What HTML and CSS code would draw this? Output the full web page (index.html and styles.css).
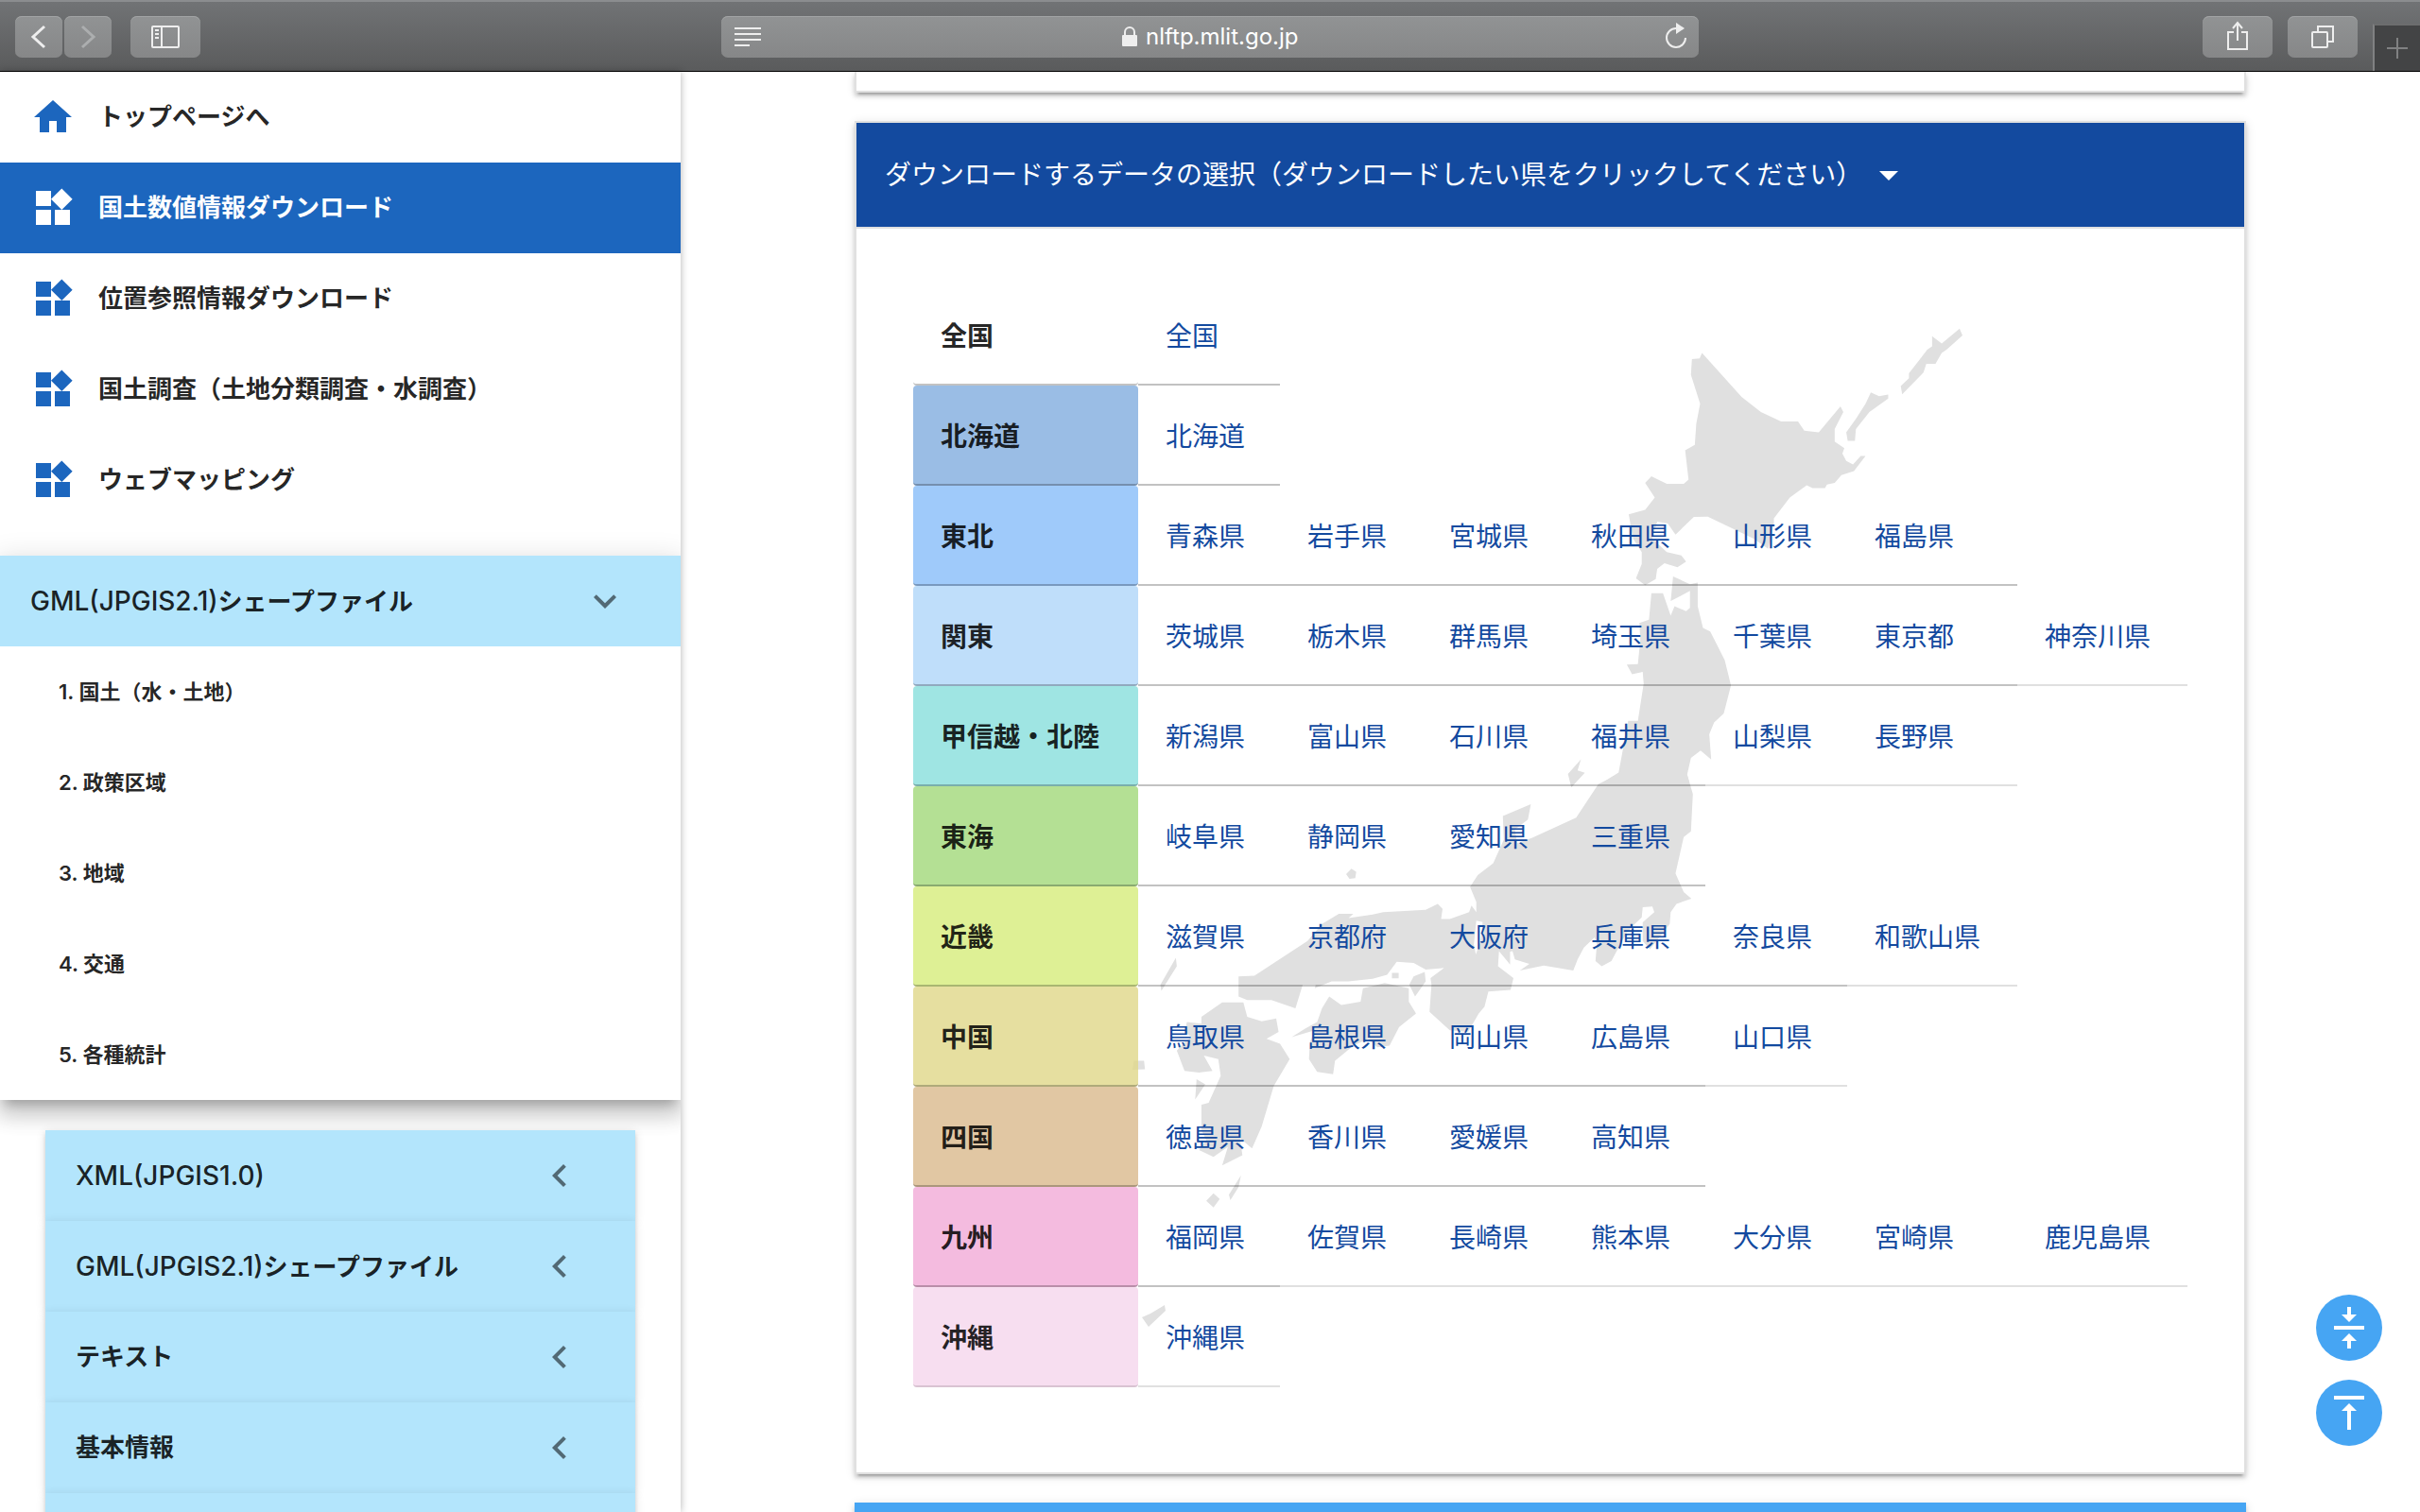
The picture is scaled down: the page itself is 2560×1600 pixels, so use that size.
FILE: index.html
```html
<!DOCTYPE html>
<html lang="ja">
<head>
<meta charset="utf-8">
<title>国土数値情報ダウンロード</title>
<link rel="stylesheet" href="styles.css">
</head>
<body>
<svg class="defs" width="0" height="0" aria-hidden="true">
  <symbol id="widgets" viewBox="0 0 24 24"><path d="M13 13v8h8v-8h-8zM3 21h8v-8H3v8zM3 3v8h8V3H3zm13.66-1.31L11 7.34 16.66 13l5.66-5.66-5.66-5.65z"/></symbol>
  <symbol id="chevron-down" viewBox="0 0 24 24"><path d="M16.59 8.59L12 13.17 7.41 8.59 6 10l6 6 6-6z"/></symbol>
  <symbol id="chevron-left" viewBox="0 0 24 24"><path d="M15.41 7.41L14 6l-6 6 6 6 1.41-1.41L10.83 12z"/></symbol>
</svg>

<header class="toolbar">
  <div class="tools">
    <div class="history">
      <button class="tool tool-nav" type="button" aria-label="戻る"><svg width="50" height="44" viewBox="0 0 50 44"><path class="line line-bold" d="M31 11L19 22l12 11"/></svg></button>
      <button class="tool tool-nav" type="button" aria-label="進む" disabled><svg width="50" height="44" viewBox="0 0 50 44"><path class="line line-bold" d="M19 11l12 11-12 11"/></svg></button>
    </div>
    <button class="tool" type="button" aria-label="サイドバー"><svg width="74" height="44" viewBox="0 0 74 44"><rect class="line" x="23" y="11" width="28" height="22" rx="1"/><path class="line" d="M33 11v22M26 15h4M26 19h4M26 23h4"/></svg></button>
  </div>
  <div class="address">
    <button class="plain" type="button" aria-label="リーダー"><svg width="28" height="44" viewBox="0 0 28 44"><path class="line" d="M0 13h28M0 19h28M0 25h28M0 31h16"/></svg></button>
    <label class="url">
      <svg width="18" height="22" viewBox="0 0 18 22"><rect x="1" y="9" width="16" height="12" rx="1" fill="#eee"/><path class="line" d="M4 10V6a5 5 0 0 1 10 0v4"/></svg>
      <input class="url-input" type="text" value="nlftp.mlit.go.jp" aria-label="アドレス">
    </label>
    <button class="plain" type="button" aria-label="再読み込み"><svg width="24" height="44" viewBox="0 0 24 44"><path class="line" d="M12 13a10 10 0 1 0 10 10"/><path d="M12 7l9 6-9 6z" fill="#eee"/></svg></button>
  </div>
  <div class="tools tools-end">
    <button class="tool" type="button" aria-label="共有"><svg width="74" height="44" viewBox="0 0 74 44"><path class="line" d="M33 17h-6v18h20V17h-6M37 26V8M32 13l5-6 5 6"/></svg></button>
    <button class="tool" type="button" aria-label="タブ一覧"><svg width="74" height="44" viewBox="0 0 74 44"><rect class="line" x="26" y="17" width="16" height="16" rx="1"/><path class="line" d="M32 16v-5h16v16h-5"/></svg></button>
    <button class="new-tab" type="button" aria-label="新規タブ"><svg width="24" height="24" viewBox="0 0 24 24"><path d="M1 12h22M12 1v22" stroke="#808182" stroke-width="2"/></svg></button>
  </div>
</header>

<div class="shell">
  <aside class="sidebar">
    <nav class="nav">
      <a class="nav-item" href="#"><svg class="icon" viewBox="0 0 24 24"><path d="M10 20v-6h4v6h5v-8h3L12 3 2 12h3v8z"/></svg>トップページへ</a>
      <a class="nav-item active" href="#"><svg class="icon"><use href="#widgets"/></svg>国土数値情報ダウンロード</a>
      <a class="nav-item" href="#"><svg class="icon"><use href="#widgets"/></svg>位置参照情報ダウンロード</a>
      <a class="nav-item" href="#"><svg class="icon"><use href="#widgets"/></svg>国土調査（土地分類調査・水調査）</a>
      <a class="nav-item" href="#"><svg class="icon"><use href="#widgets"/></svg>ウェブマッピング</a>
    </nav>
    <section class="panel panel-open">
      <button class="panel-head" type="button"><span><span class="latin">GML(JPGIS2.1)</span>シェープファイル</span><svg class="icon"><use href="#chevron-down"/></svg></button>
      <a class="sub-item" href="#">1. 国土（水・土地）</a>
      <a class="sub-item" href="#">2. 政策区域</a>
      <a class="sub-item" href="#">3. 地域</a>
      <a class="sub-item" href="#">4. 交通</a>
      <a class="sub-item" href="#">5. 各種統計</a>
    </section>
    <div class="closed-panels">
      <section class="panel"><button class="panel-head" type="button"><span class="latin">XML(JPGIS1.0)</span><svg class="icon"><use href="#chevron-left"/></svg></button></section>
      <section class="panel"><button class="panel-head" type="button"><span><span class="latin">GML(JPGIS2.1)</span>シェープファイル</span><svg class="icon"><use href="#chevron-left"/></svg></button></section>
      <section class="panel"><button class="panel-head" type="button">テキスト<svg class="icon"><use href="#chevron-left"/></svg></button></section>
      <section class="panel"><button class="panel-head" type="button">基本情報<svg class="icon"><use href="#chevron-left"/></svg></button></section>
      <section class="panel panel-blank"></section>
    </div>
  </aside>

  <main class="content">
    <section class="card card-previous"></section>
    <section class="card">
      <h2 class="card-title">ダウンロードするデータの選択（ダウンロードしたい県をクリックしてください）<svg class="icon" viewBox="0 0 24 24"><path d="M7 10l5 5 5-5z"/></svg></h2>
      <div class="card-body">
        <svg class="map" width="900" height="1100" viewBox="1190 330 900 1100" aria-hidden="true">
          <g transform="translate(1600 320) scale(.5102 .3571)">
            <path d="M927 78L933 98 900 140 890 150 877 182 858 182 852 208 808 272 805 248 822 225 822 210 860 140 870 130 870 100 890 122z"/>
            <path d="M743 267L760 278 779 273 779 285 740 325 712 375 710 410 695 410 692 385 712 345 732 300z"/>
            <path d="M393 150L475 280 515 325 557 353 592 353 605 380 635 385 680 308 686 325 668 375 668 412 688 432 684 448 692 470 706 480 722 455 732 455 708 500 682 512 668 535 652 540 648 550 622 550 610 542 575 578 542 640 542 655 530 730 500 700 405 635 376 636 338 688 322 655 300 650 290 700 320 740 350 750 360 768 342 785 315 773 300 790 297 820 275 838 256 818 268 775 268 740 250 700 241 628 275 615 295 578 275 535 288 515 320 538 355 538 365 525 358 438 378 422 381 360 389 300 370 215 372 168 388 166z"/>
            <path d="M288 862L312 862 328 928 336 900 360 915 368 905 368 855 328 885 333 812 368 835 384 830 384 900 395 965 410 975 440 1060 453 1135 438 1218 418 1245 408 1280 412 1355 390 1328 370 1350 362 1400 366 1420 190 1420 220 1393 240 1240 260 1240 272 1130 270 1095 248 1102 237 1073 260 1072 265 1000 263 950 283 940z"/>
          </g>
          <g transform="translate(1100 760) scale(.5102 .3571)">
            <path d="M1342 166L1354 225 1350 335 1335 352 1318 460 1335 515 1351 535 1320 550 1308 575 1306 610 1290 640 1265 685 1250 660 1250 605 1274 575 1270 558 1250 560 1248 590 1230 615 1215 640 1200 680 1185 720 1165 735 1152 720 1155 670 1150 650 1128 680 1115 715 1106 748 1045 733 995 748 1015 728 985 715 980 690 975 692 975 730 952 690 950 735 982 770 976 805 930 810 922 855 910 875 888 930 850 925 808 870 812 790 810 770 838 740 800 745 775 725 740 722 720 760 690 772 640 780 605 780 570 800 572 790 545 790 530 860 480 835 430 835 412 825 412 765 445 763 555 660 585 610 620 580 650 580 640 592 690 582 712 575 800 568 825 550 835 565 832 595 850 595 890 575 895 555 905 575 905 545 892 500 908 465 940 430 962 360 960 290 1018 255 1012 300 985 330 990 370 1020 355 1112 295 1158 195 1200 166z"/>
            <path d="M905 600L918 604 914 660 904 700 900 670z" class="lake"/>
            <path d="M798 752L800 780 778 825 766 790 775 765zM730 755h14v16h-14z"/>
            <path d="M600 825L625 850 665 840 670 800 715 785 765 800 765 840 780 875 745 915 725 970 700 975 680 950 650 970 612 1015 608 1055 575 1048 558 1010 560 960 570 925 522 945 550 920 575 900 585 860z"/>
            <path d="M378 842L422 842 430 885 460 898 490 890 495 930 470 950 498 965 518 1010 485 1090 460 1210 440 1275 415 1245 420 1295 378 1325 390 1270 360 1300 330 1280 345 1250 335 1220 335 1145 350 1140 375 1060 370 1010 340 1000 358 1045 330 1050 300 1045 284 985 300 960 315 945 300 930 305 900 335 905 335 885z"/>
            <path d="M325 1070L343 1085 322 1130zM195 1015H216L218 1040 192 1042zM282 710L284 735 252 808 250 790zM417 1355L412 1390 395 1428 392 1412zM360 1408L373 1425 360 1450 345 1430zM1122 122L1115 155 1130 162 1102 205 1095 165zM646 446L656 455 654 474 642 476 635 462z"/>
          </g>
          <path d="M1232 1381L1233 1387 1215 1404 1208 1394 1217 1390z"/>
        </svg>
        <table class="areas">
          <colgroup><col class="c-region"><col><col><col><col><col><col class="c-wide"><col class="c-wide"></colgroup>
          <tr><th scope="row">全国</th><td><a href="#">全国</a></td></tr>
          <tr><th scope="row" class="hokkaido">北海道</th><td><a href="#">北海道</a></td></tr>
          <tr><th scope="row" class="tohoku">東北</th><td><a href="#">青森県</a></td><td><a href="#">岩手県</a></td><td><a href="#">宮城県</a></td><td><a href="#">秋田県</a></td><td><a href="#">山形県</a></td><td><a href="#">福島県</a></td></tr>
          <tr><th scope="row" class="kanto">関東</th><td><a href="#">茨城県</a></td><td><a href="#">栃木県</a></td><td><a href="#">群馬県</a></td><td><a href="#">埼玉県</a></td><td><a href="#">千葉県</a></td><td><a href="#">東京都</a></td><td class="open"><a href="#">神奈川県</a></td></tr>
          <tr><th scope="row" class="koshinetsu">甲信越・北陸</th><td><a href="#">新潟県</a></td><td><a href="#">富山県</a></td><td><a href="#">石川県</a></td><td><a href="#">福井県</a></td><td class="open"><a href="#">山梨県</a></td><td class="open"><a href="#">長野県</a></td></tr>
          <tr><th scope="row" class="tokai">東海</th><td><a href="#">岐阜県</a></td><td><a href="#">静岡県</a></td><td><a href="#">愛知県</a></td><td><a href="#">三重県</a></td></tr>
          <tr><th scope="row" class="kinki">近畿</th><td><a href="#">滋賀県</a></td><td><a href="#">京都府</a></td><td><a href="#">大阪府</a></td><td><a href="#">兵庫県</a></td><td><a href="#">奈良県</a></td><td class="open"><a href="#">和歌山県</a></td></tr>
          <tr><th scope="row" class="chugoku">中国</th><td><a href="#">鳥取県</a></td><td><a href="#">島根県</a></td><td><a href="#">岡山県</a></td><td><a href="#">広島県</a></td><td class="open"><a href="#">山口県</a></td></tr>
          <tr><th scope="row" class="shikoku">四国</th><td><a href="#">徳島県</a></td><td><a href="#">香川県</a></td><td><a href="#">愛媛県</a></td><td><a href="#">高知県</a></td></tr>
          <tr><th scope="row" class="kyushu">九州</th><td><a href="#">福岡県</a></td><td class="open"><a href="#">佐賀県</a></td><td class="open"><a href="#">長崎県</a></td><td class="open"><a href="#">熊本県</a></td><td class="open"><a href="#">大分県</a></td><td class="open"><a href="#">宮崎県</a></td><td class="open"><a href="#">鹿児島県</a></td></tr>
          <tr><th scope="row" class="okinawa open">沖縄</th><td class="open"><a href="#">沖縄県</a></td></tr>
        </table>
      </div>
    </section>
    <section class="card card-next"></section>
  </main>
</div>

<div class="fabs">
  <button class="fab" type="button" aria-label="閉じる"><svg class="icon" viewBox="0 0 24 24"><path d="M8 19h3v4h2v-4h3l-4-4-4 4zm8-14h-3V1h-2v4H8l4 4 4-4zM4 11v2h16v-2H4z"/></svg></button>
  <button class="fab" type="button" aria-label="先頭へ"><svg class="icon" viewBox="0 0 24 24"><path d="M8 11h3v10h2V11h3l-4-4-4 4zM4 3v2h16V3H4z"/></svg></button>
</div>
</body>
</html>
```
FILE: styles.css
```css
* { box-sizing: border-box; }

body {
  margin: 0;
  height: 100vh;
  display: flex;
  flex-direction: column;
  overflow: hidden;
  background: #fff;
  color: rgba(0, 0, 0, .87);
  font-family: Inter, "Noto Sans CJK JP", sans-serif;
  font-size: 28px;
}

button, input { font: inherit; color: inherit; border: 0; padding: 0; margin: 0; background: none; }
button { cursor: pointer; }
a { color: inherit; text-decoration: none; }
svg { display: block; flex: none; }
.defs { position: absolute; }
.icon { width: 48px; height: 48px; fill: currentColor; }

/* Browser toolbar */
.toolbar {
  flex: none;
  height: 76px;
  display: grid;
  grid-template-columns: 1fr 1034px 1fr;
  align-items: center;
  background: linear-gradient(#717375, #5a5b5c);
  border-top: 2px solid #8b8d8f;
  border-bottom: 1px solid #000;
}
.tools { display: flex; align-items: center; gap: 20px; padding-left: 16px; height: 100%; }
.tools-end { justify-content: flex-end; gap: 16px; }
.history { display: flex; gap: 2px; }
.tool {
  height: 44px;
  border-radius: 7px;
  background: linear-gradient(#919394, #868788);
  box-shadow: inset 0 1px #a2a4a5;
}
.line { fill: none; stroke: #eee; stroke-width: 2; }
.line-bold { stroke-width: 3; }
.tool:disabled .line { stroke: #acaeaf; }
.address {
  height: 44px;
  display: flex;
  align-items: center;
  justify-content: space-between;
  padding: 0 12px 0 14px;
  border-radius: 7px;
  background: linear-gradient(#919394, #868788);
  box-shadow: inset 0 1px #a2a4a5;
}
.url { display: flex; align-items: center; gap: 8px; color: #fff; font-size: 24px; }
.url-input { width: 168px; height: 32px; outline: 0; }
.new-tab {
  align-self: flex-end;
  width: 50px;
  height: 50px;
  display: grid;
  place-items: center;
  background: #434445;
  border-left: 2px solid #808182;
  border-top: 2px solid #6c6d6e;
}

/* Page columns */
.shell { flex: 1; min-height: 0; display: flex; }
.sidebar {
  flex: none;
  width: 720px;
  overflow: hidden;
  background: #fff;
  box-shadow: 0 0 8px rgba(0, 0, 0, .3);
  font-size: 26px;
  line-height: 40px;
  font-weight: 600;
}
.nav { margin-bottom: 32px; }
.nav-item { display: flex; align-items: center; gap: 24px; height: 96px; padding: 0 32px; }
.nav-item .icon { color: #1c66be; }
.nav-item.active { background: #1c66be; color: #fff; }
.nav-item.active .icon { color: #fff; }

.panel {
  background: #fff;
  box-shadow: 0 6px 2px -4px rgba(0, 0, 0, .2), 0 4px 4px rgba(0, 0, 0, .14), 0 2px 10px rgba(0, 0, 0, .12);
}
.panel-open {
  box-shadow: 0 10px 10px -6px rgba(0, 0, 0, .2), 0 16px 20px 2px rgba(0, 0, 0, .14), 0 6px 28px 4px rgba(0, 0, 0, .12);
}
.panel-head {
  width: 100%;
  height: 96px;
  display: flex;
  align-items: center;
  justify-content: space-between;
  padding: 0 56px 0 32px;
  background: #b3e5fc;
  text-align: left;
}
.panel-head .icon { color: rgba(0, 0, 0, .54); }
.latin { font-size: 28px; font-weight: 500; }
.panel-blank { height: 96px; background: #b3e5fc; }
.sub-item { display: flex; align-items: center; height: 96px; padding: 0 62px; font-size: 22px; }
.closed-panels { padding: 32px 48px; }

/* Main column */
.content { flex: 1; min-width: 0; overflow: hidden; padding: 0 184px; }
.card {
  margin-bottom: 30px;
  background: #fff;
  border: 2px solid #e0e0e0;
  box-shadow: 0 6px 2px -4px rgba(0, 0, 0, .2), 0 4px 4px rgba(0, 0, 0, .14), 0 2px 10px rgba(0, 0, 0, .12);
}
.card-previous { height: 22px; border-top: 0; }
.card-next { height: 110px; background: #46a5f3; border: 0; }
.card-title {
  display: flex;
  align-items: center;
  gap: 4px;
  height: 112px;
  margin: 0;
  padding: 0 30px;
  background: #134a9f;
  border-bottom: 2px solid #e0e0e0;
  color: #fff;
  font-size: 28px;
  line-height: 40px;
  font-weight: 400;
}
.card-body { position: relative; padding: 60px 60px 90px; }
.map { position: absolute; left: 284px; top: 88px; fill: #e0e0e0; }
.lake { fill: #fff; }

.areas { position: relative; width: 1348px; table-layout: fixed; border-collapse: separate; border-spacing: 0; }
.areas col { width: 150px; }
.areas .c-region { width: 238px; }
.areas .c-wide { width: 180px; }
.areas th, .areas td {
  height: 106px;
  padding: 0 0 0 29px;
  border-bottom: 2px solid rgba(0, 0, 0, .24);
  text-align: left;
  white-space: nowrap;
}
.areas .open { border-bottom-color: rgba(0, 0, 0, .12); }
.areas th { border-radius: 4px; font-weight: 700; }
.areas a { color: #134a9f; }
.hokkaido { background: #9abde5; }
.tohoku { background: #9fcafa; }
.kanto { background: #bfdefa; }
.koshinetsu { background: #9fe5e3; }
.tokai { background: #b4e094; }
.kinki { background: #def095; }
.chugoku { background: rgba(224, 215, 136, .8); }
.shikoku { background: #e1c7a3; }
.kyushu { background: #f4bbdf; }
.okinawa { background: #f7def0; }

.fabs { position: fixed; right: 40px; bottom: 70px; display: grid; gap: 20px; }
.fab { width: 70px; height: 70px; display: grid; place-items: center; border-radius: 50%; background: #46a5f3; color: #fff; }
```
